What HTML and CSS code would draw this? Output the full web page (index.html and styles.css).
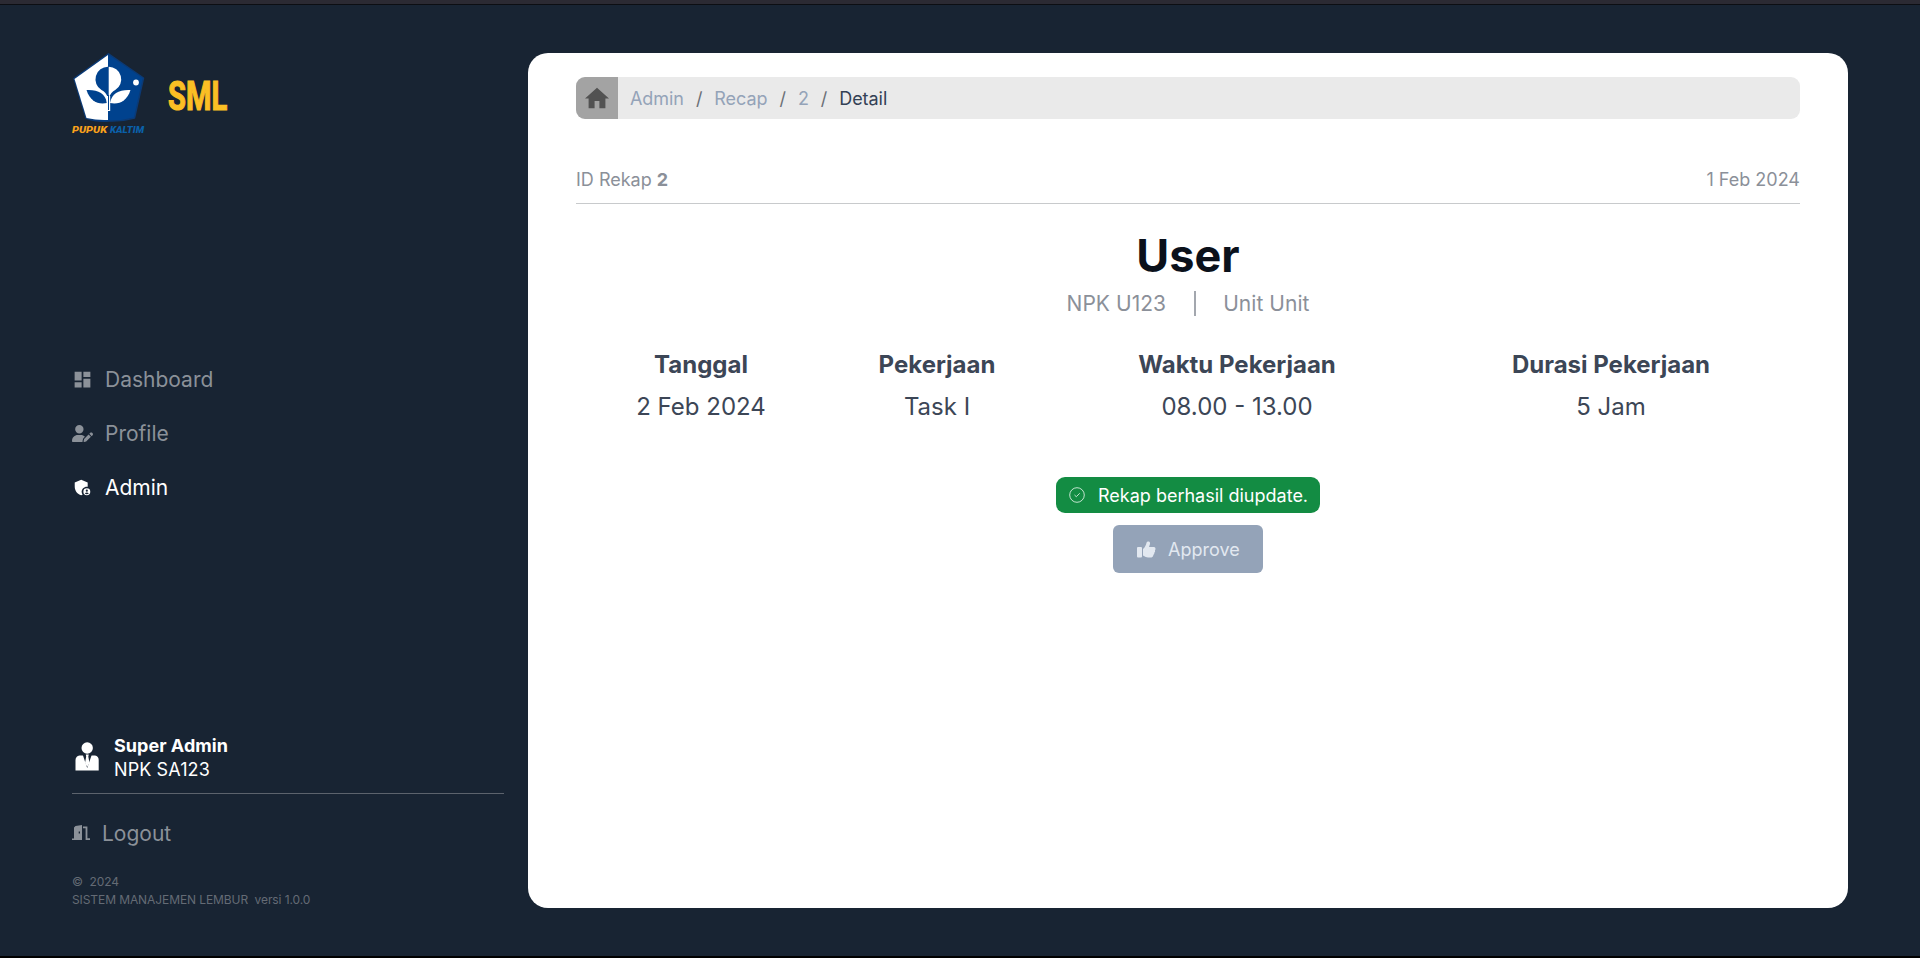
FILE: index.html
```html
<!DOCTYPE html>
<html lang="id">
<head>
<meta charset="utf-8">
<title>SML - Detail Rekap</title>
<link rel="stylesheet" href="styles.css">
</head>
<body>
<div class="app">
  <aside class="sidebar">
    <header class="brand">
      <svg class="logo" viewBox="0 0 74 84" width="74" height="84">
        <path d="M36.500 .800 71.500 25 62.500 65Q50 68.500 37 68Q24 69 14 65L2 25.500Z" fill="#00428e" stroke="#0b3a76" stroke-width="1.500" stroke-linejoin="round"/>
        <path d="M36 2 2.500 26 14.500 65Q25 67.500 36 67Z" fill="#fff"/>
        <path d="M36 13.800A12.500 12.500 0 0 0 29.500 37Q34 39 36 45Z" fill="#00428e"/>
        <path d="M36.700 13.800A12.500 12.500 0 0 1 43.200 37Q39 39 36.700 45Z" fill="#fff"/>
        <path d="M14.500 37C26 36.500 33 40 35 50C26 52 18 48 14.500 37Z" fill="#00428e"/>
        <path d="M58.500 37C47 36.500 40 40 38 50C47 52 55 48 58.500 37Z" fill="#fff"/>
        <path d="M34.700 43V58H38.200V43Z" fill="#fff"/><path d="M36.500 42V57" stroke="#00428e"/>
        <circle cx="64" cy="29.500" r="2.900" fill="#fff"/>
        <text x="0" y="80" font-size="9.500" textLength="35" lengthAdjust="spacingAndGlyphs" class="logo-text gold">PUPUK</text>
        <text x="38" y="80" font-size="9.500" textLength="34" lengthAdjust="spacingAndGlyphs" class="logo-text blue">KALTIM</text>
      </svg>
      <span class="brand-name">SML</span>
    </header>
    <nav class="menu">
      <a class="item"><svg width="21" height="21" viewBox="0 0 24 24"><path d="M3 13h8V3H3zm0 8h8v-6H3zm10 0h8V11h-8zm0-18v6h8V3z"/></svg><span>Dashboard</span></a>
      <a class="item"><svg width="21" height="17" viewBox="0 0 640 512"><path d="M224 256A128 128 0 1 0 224 0a128 128 0 1 0 0 256zm-45.700 48C79.800 304 0 383.800 0 482.300 0 498.700 13.300 512 29.700 512h293.100c-3.100-8.800-3.700-18.400-1.400-27.800l15-60.100c2.800-11.300 8.600-21.500 16.800-29.700l40.300-40.300c-32.100-31-75.700-50.100-123.900-50.100h-91.300zm435.500-68.300c-15.600-15.600-40.900-15.600-56.600 0l-29.400 29.400 71 71 29.400-29.400c15.600-15.600 15.600-40.900 0-56.600l-14.400-14.400zM375.900 417c-4.100 4.100-7 9.200-8.400 14.900l-15 60.100c-1.400 5.500.2 11.200 4.200 15.200s9.700 5.600 15.200 4.200l60.100-15c5.600-1.400 10.800-4.300 14.900-8.400l129.200-129.300-71-71L375.900 417z"/></svg><span>Profile</span></a>
      <a class="item active"><svg width="21" height="19" viewBox="0 0 24 22"><path d="M17 10c.340 0 .670.040 1 .090V5.270L10.500 2 3 5.270v4.910c0 4.540 3.200 8.790 7.500 9.820.550-.130 1.080-.320 1.600-.550A5.973 5.973 0 0 1 11 16c0-3.310 2.690-6 6-6z"/><path fill-rule="evenodd" d="M17 12a4 4 0 1 0 0 8 4 4 0 0 0 0-8zm0 1.400a1.250 1.250 0 1 1 0 2.500 1.250 1.250 0 0 1 0-2.500zm0 5.500c-.950 0-1.780-.500-2.290-1.240.560-.500 1.500-.860 2.290-.860s1.730.360 2.290.860A2.780 2.780 0 0 1 17 18.900z"/></svg><span>Admin</span></a>
    </nav>
    <footer class="foot">
      <div class="account">
        <svg width="24" height="30" viewBox="0 0 24 30"><circle cx="12.200" cy="6" r="5.700"/><path d="M4.500 13.500H20Q23.700 14 23.700 18V28.500H.500V18Q.700 14 4.500 13.500Z"/><path d="M7.500 12 12.200 26 17 12Z" fill="#182433"/><path d="M10.800 12.500H13.800L13.300 14.500 14.500 21 12.200 25 10 21 11.200 14.500Z"/></svg>
        <div><div class="account-name">Super Admin</div><div class="account-id">NPK SA123</div></div>
      </div>
      <a class="logout"><svg width="18" height="16" viewBox="0 0 18 16"><path fill-rule="evenodd" d="M0 13.500H2V2.500L3.500 1 10 0V15H0ZM6.700 6.500V8.500H8V6.500Z"/><path d="M11 2.300H14.500V14.200H18" fill="none" stroke="#8b9199" stroke-width="1.800"/></svg><span>Logout</span></a>
      <p class="copy">©&nbsp; 2024<br>SISTEM MANAJEMEN LEMBUR&nbsp; versi 1.0.0</p>
    </footer>
  </aside>
  <main class="panel">
    <nav class="crumbs">
      <a class="home"><svg width="24" height="22" viewBox="2 3 20 17"><path d="M10 20v-6h4v6h5v-8h3L12 3 2 12h3v8z"/></svg></a>
      <a>Admin</a><i>/</i><a>Recap</a><i>/</i><a>2</a><i>/</i><b>Detail</b>
    </nav>
    <div class="meta"><span>ID Rekap <b>2</b></span><span>1 Feb 2024</span></div>
    <h1 class="name">User</h1>
    <div class="unit"><span>NPK U123</span><span class="bar"></span><span>Unit Unit</span></div>
    <div class="detail">
      <div><h2>Tanggal</h2><p>2 Feb 2024</p></div>
      <div><h2>Pekerjaan</h2><p>Task I</p></div>
      <div><h2>Waktu Pekerjaan</h2><p>08.00 - 13.00</p></div>
      <div><h2>Durasi Pekerjaan</h2><p>5 Jam</p></div>
    </div>
    <div class="toast"><svg width="16" height="16" viewBox="0 0 16 16"><circle cx="8" cy="8" r="7.300"/><path d="M5.500 8 7.300 9.700 10.700 6.300"/></svg><span>Rekap berhasil diupdate.</span></div>
    <button class="approve"><svg width="19" height="17" viewBox="0 0 19 17"><rect x="0" y="6" width="5" height="10.500" rx="1"/><path d="M6 8C8 6.500 9 4 9.500 1.800 10 .200 12.500-.200 13 1.800 13.300 3 12.300 5 12 6H17Q18.700 6.200 18.500 8 18.500 9 17.900 9.400 18.500 10.600 17.300 11.700 17.500 13 16.500 13.800 16.300 16 14.500 16.500H11Q9 16.500 6 14.500Z"/></svg><span>Approve</span></button>
  </main>
</div>
</body>
</html>
```
FILE: styles.css
```css
* { box-sizing: border-box; }
body { margin: 0; background: #182433; font-family: Inter, "Liberation Sans", sans-serif; }
h1, h2, p { margin: 0; }
svg { display: block; flex: none; fill: currentColor; }
.app { height: 958px; display: flex; gap: 24px; padding: 49px 72px 48px; border-top: 4px solid #2b2a33; border-bottom: 2px solid #000; box-shadow: inset 0 1px #0c0e13; }
.sidebar { width: 432px; display: flex; flex-direction: column; color: #8b9199; }
.brand { display: flex; align-items: flex-start; height: 84px; }
.logo-text { font-family: Roboto, sans-serif; font-weight: 900; font-style: italic; }
.gold { fill: #f9a11b; }
.blue { fill: #0b60a9; }
.brand-name { margin: 17px 0 0 22px; font: 700 41px/52px Roboto, sans-serif; color: #fbbf24; -webkit-text-stroke: 1.2px #fbbf24; transform: scaleX(.71); transform-origin: 0 50%; }
.menu { margin-top: 215px; display: flex; flex-direction: column; }
.item { display: flex; align-items: center; gap: 12px; height: 54px; font-size: 21px; line-height: 30px; }
.item span, .logout span { padding-top: 2px; }
.active { color: #fff; }
.foot { margin-top: auto; }
.account { display: flex; align-items: center; gap: 15px; padding: 1px 0 11px 3px; border-bottom: 1px solid #5c636d; color: #fff; font-size: 18px; line-height: 24px; }
.account svg { margin-top: -2px; }
.account-name { font-weight: 700; letter-spacing: .03px; }
.account-id { letter-spacing: .1px; }
.logout { display: flex; align-items: center; gap: 12px; margin-top: 23px; font-size: 21px; line-height: 30px; }
.copy { margin: 24px 0 -1px; font-size: 12px; line-height: 18px; letter-spacing: -.09px; color: #646b75; }
.panel { width: 1320px; padding: 24px 48px; border-radius: 20px; background: #fff; display: flex; flex-direction: column; align-items: center; }
.crumbs { align-self: stretch; height: 42px; display: flex; align-items: center; gap: 12px; border-radius: 9px; background: #eaeaea; font-size: 18px; letter-spacing: -.06px; overflow: hidden; color: #94a3b8; }
.crumbs i { font-style: normal; color: #6b7077; }
.crumbs b { font-weight: 400; color: #334155; }
.home { width: 42px; height: 42px; display: flex; align-items: center; justify-content: center; background: #a3a3a3; color: #525252; }
.meta { align-self: stretch; display: flex; justify-content: space-between; margin-top: 46px; padding-bottom: 8px; border-bottom: 1px solid #c8cacc; font-size: 18px; line-height: 30px; color: #8b9099; }
.name { margin-top: 22px; font-size: 45px; line-height: 60px; font-weight: 700; color: #0b111b; }
.unit { display: flex; align-items: center; gap: 27.500px; margin-top: 5px; font-size: 21px; line-height: 26px; letter-spacing: .05px; color: #8b9099; }
.bar { width: 2px; height: 25px; margin-top: -2px; background: #a3a7ae; }
.detail { align-self: stretch; display: grid; grid-template-columns: 250px 222px 378px 370px; margin-top: 27px; text-align: center; font-size: 24px; line-height: 42px; color: #3c4656; }
.detail h2 { font-size: 24px; font-weight: 700; }
.toast { display: flex; align-items: center; gap: 13px; width: 264px; height: 36px; margin-top: 49px; padding-left: 13px; border-radius: 9px; background: #138c43; color: #fff; font-size: 18px; white-space: nowrap; }
.toast svg { fill: none; stroke: #d5ecdd; stroke-width: .9; }
.approve { display: flex; align-items: center; gap: 12px; width: 150px; height: 48px; margin-top: 12px; padding: 0 0 0 24px; border: 0; border-radius: 6px; background: #94a3b8; color: #e2e8f0; font: 18px Inter, sans-serif; }
```
